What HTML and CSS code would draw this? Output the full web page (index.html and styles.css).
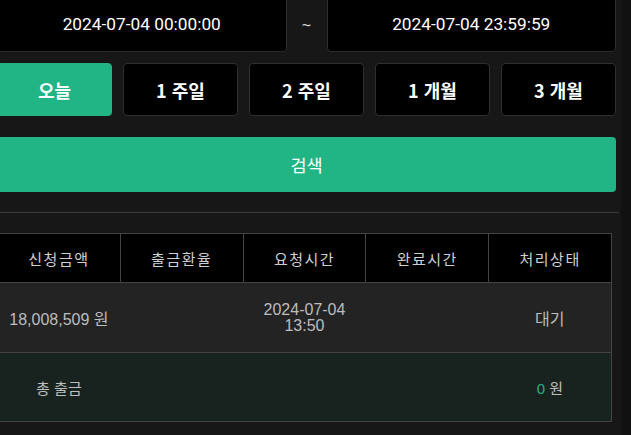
FILE: index.html
```html
<!DOCTYPE html>
<html lang="ko">
<head>
<meta charset="utf-8">
<title>출금 내역</title>
<link rel="stylesheet" href="styles.css">
</head>
<body>
<div class="page">
  <div class="date-row">
    <div class="date-input">2024-07-04 00:00:00</div>
    <div class="tilde">~</div>
    <div class="date-input">2024-07-04 23:59:59</div>
  </div>
  <div class="range-row">
    <button class="range-btn active">오늘</button>
    <button class="range-btn">1 주일</button>
    <button class="range-btn">2 주일</button>
    <button class="range-btn">1 개월</button>
    <button class="range-btn">3 개월</button>
  </div>
  <button class="search-btn">검색</button>
  <div class="divider"></div>
  <table class="list">
    <thead>
      <tr>
        <th>신청금액</th>
        <th>출금환율</th>
        <th>요청시간</th>
        <th>완료시간</th>
        <th>처리상태</th>
      </tr>
    </thead>
    <tbody>
      <tr class="row">
        <td>18,008,509 원</td>
        <td></td>
        <td class="time"><div>2024-07-04</div><div>13:50</div></td>
        <td></td>
        <td>대기</td>
      </tr>
      <tr class="total">
        <td>총 출금</td>
        <td></td>
        <td></td>
        <td></td>
        <td><span class="zero">0</span> 원</td>
      </tr>
    </tbody>
  </table>
</div>
</body>
</html>
```

FILE: styles.css
```css
html, body {
  margin: 0;
  padding: 0;
  background: #111111;
}

.page {
  width: 624px;
  margin-left: -3px;
  min-height: 435px;
  box-sizing: border-box;
  padding: 0 5px 14px 0;
  background: #171717;
  font-family: "Liberation Sans", "Noto Sans CJK KR", sans-serif;
  overflow: hidden;
}

.date-row {
  display: grid;
  grid-template-columns: 1fr 40px 1fr;
  height: 56px;
  margin-top: -4px;
}

.date-input {
  display: flex;
  align-items: center;
  justify-content: center;
  background: #000;
  border: 1px solid #2c2c2c;
  border-radius: 4px;
  color: #fff;
  font-family: Roboto, "Noto Sans CJK KR", sans-serif;
  font-size: 17.3px;
}

.tilde {
  display: flex;
  align-items: center;
  justify-content: center;
  color: #ddd;
  font-size: 16px;
  padding-top: 3px;
}

.range-row {
  display: grid;
  grid-template-columns: repeat(5, 1fr);
  gap: 11px;
  margin-top: 11px;
  height: 53px;
}

.range-btn {
  background: #000;
  border: 1px solid #2f2f2f;
  border-radius: 4px;
  color: #fff;
  font-family: "Noto Sans CJK KR", sans-serif;
  font-weight: 700;
  font-size: 18px;
  padding: 0;
}

.range-btn.active {
  background: #21b585;
  border-color: #21b585;
}

.search-btn {
  display: block;
  width: 100%;
  height: 55px;
  margin-top: 21px;
  background: #21b585;
  border: none;
  border-radius: 4px;
  color: #fff;
  font-family: "Noto Sans CJK KR", sans-serif;
  font-size: 17.5px;
  padding: 0;
}

.divider {
  height: 1px;
  background: #3a3a3a;
  margin: 20px -3px 0 0;
}

.list {
  width: 615px;
  margin-top: 20px;
  border-collapse: collapse;
  table-layout: fixed;
  font-family: "Noto Sans CJK KR", sans-serif;
  font-size: 15px;
  color: #bdbdbd;
}

.list th {
  background: #000;
  border: 1px solid #444;
  height: 48px;
  padding: 0;
  font-weight: 400;
  font-size: 15px;
  letter-spacing: 1.5px;
  color: #cfcfcf;
}

.list td {
  padding: 0;
  text-align: center;
  border-bottom: 1px solid #444;
}

.list td:last-child {
  border-right: 1px solid #444;
}

.row td {
  background: #232323;
  height: 69px;
  font-family: "Liberation Sans", "Noto Sans CJK KR", sans-serif;
  font-size: 16px;
}

.row .time {
  font-size: 16px;
  line-height: 16px;
}

.total td {
  background: #18221f;
  height: 68px;
}

.zero {
  color: #21b585;
  font-family: "Liberation Sans", sans-serif;
}
```
